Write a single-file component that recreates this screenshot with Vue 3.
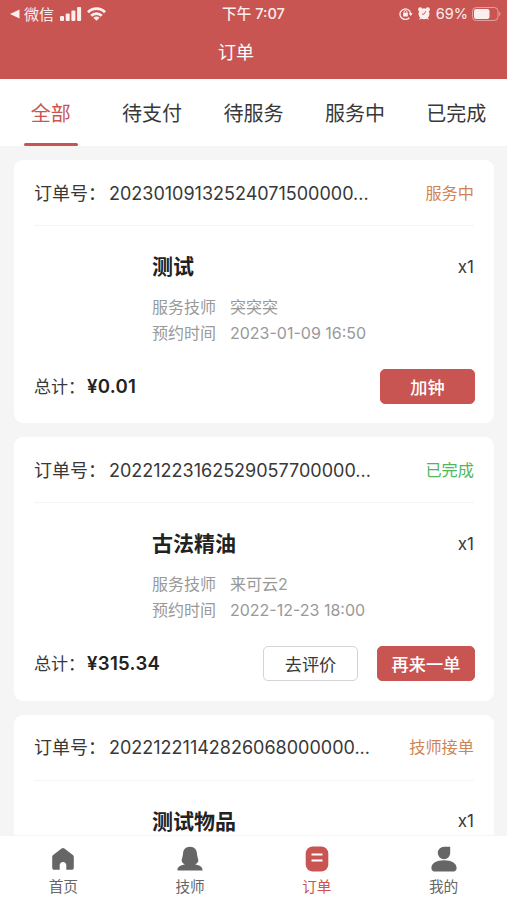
<script setup>
import { ref } from 'vue'

const tabs = ['全部', '待支付', '待服务', '服务中', '已完成']
const activeTab = ref('全部')

const orders = [
  {
    no: '20230109132524071500000...',
    status: '服务中',
    tone: 'orange',
    title: '测试',
    count: 1,
    master: '突突突',
    time: '2023-01-09 16:50',
    total: '0.01',
    actions: [{ text: '加钟', primary: true }],
  },
  {
    no: '20221223162529057700000...',
    status: '已完成',
    tone: 'green',
    title: '古法精油',
    count: 1,
    master: '来可云2',
    time: '2022-12-23 18:00',
    total: '315.34',
    actions: [
      { text: '去评价', primary: false },
      { text: '再来一单', primary: true },
    ],
  },
  {
    no: '20221221142826068000000...',
    status: '技师接单',
    tone: 'orange',
    title: '测试物品',
    count: 1,
  },
]

const navItems = [
  { key: 'home', text: '首页' },
  { key: 'master', text: '技师' },
  { key: 'order', text: '订单' },
  { key: 'mine', text: '我的' },
]
const activeNav = ref('order')
</script>

<template>
  <div class="page">
    <header class="header">
      <div class="status">
        <div class="status__side">
          <svg class="status__back" width="10" height="10" viewBox="0 0 10 10">
            <path d="M0 5 9.5 0.5v9z" fill="currentColor" />
          </svg>
          <span class="status__app">微信</span>
          <svg class="status__signal" width="22" height="14" viewBox="0 0 22 14" fill="currentColor">
            <rect x="0" y="9" width="4" height="5" rx="1" />
            <rect x="5.7" y="6.5" width="4" height="7.5" rx="1" />
            <rect x="11.4" y="3.5" width="4" height="10.5" rx="1" />
            <rect x="17.1" y="0" width="4" height="14" rx="1" />
          </svg>
          <svg class="status__wifi" width="19" height="14" viewBox="0 0 19 14">
            <g fill="none" stroke="currentColor" stroke-width="2.8">
              <path d="M1 5.2a12 12 0 0 1 17 0" />
              <path d="M4.2 8.7a7.6 7.6 0 0 1 10.6 0" />
            </g>
            <path d="M9.5 13.8 6.4 10.8a4.4 4.4 0 0 1 6.2 0z" fill="currentColor" />
          </svg>
        </div>
        <span class="status__time">下午 7:07</span>
        <div class="status__side status__side--right">
          <svg width="14" height="13" viewBox="0 0 14 13">
            <path d="M10.3 10.7a5.3 5.3 0 1 1 1.3-3" fill="none" stroke="currentColor" stroke-width="1.3" />
            <path d="M9.7 6.3h4l-2 2.6z" fill="currentColor" />
            <rect x="4.1" y="5.8" width="4.8" height="3.8" rx="0.6" fill="currentColor" />
            <path d="M5.1 6V4.9a1.4 1.4 0 0 1 2.8 0V6" fill="none" stroke="currentColor" />
          </svg>
          <svg class="status__alarm" width="12" height="13" viewBox="0 0 12 13">
            <g fill="currentColor">
              <circle cx="2.2" cy="2.4" r="2.1" />
              <circle cx="9.8" cy="2.4" r="2.1" />
              <circle cx="6" cy="6.8" r="5.5" />
              <path d="m1 12.8 1.5-2.8 1.8 1.2zM11 12.8l-1.5-2.8-1.8 1.2z" />
            </g>
            <path d="M7.8 4.2 6 7.2H4" fill="none" stroke="#c95553" stroke-width="0.9" />
          </svg>
          <span class="status__percent">69%</span>
          <svg class="status__battery" width="29" height="14" viewBox="0 0 29 14">
            <rect x="0.5" y="0.5" width="25.5" height="13" rx="3.8" fill="none" stroke="currentColor" opacity="0.5" />
            <path d="M27.2 4.8c1.6.6 1.6 3.8 0 4.4z" fill="currentColor" opacity="0.5" />
            <rect x="2" y="2" width="15.5" height="10" rx="2.2" fill="currentColor" />
          </svg>
        </div>
      </div>
      <h1 class="header__title">订单</h1>
    </header>

    <nav class="tabs">
      <button
        v-for="tab in tabs"
        :key="tab"
        type="button"
        class="tabs__item"
        :class="{ 'tabs__item--active': tab === activeTab }"
        @click="activeTab = tab"
      >
        {{ tab }}
      </button>
    </nav>

    <main class="list">
      <section v-for="order in orders" :key="order.no" class="card">
        <div class="card__head">
          <span class="card__label">订单号：</span>
          <span class="card__no">{{ order.no }}</span>
          <span class="card__status" :class="`card__status--${order.tone}`">{{ order.status }}</span>
        </div>
        <div class="card__body">
          <div class="card__cover"></div>
          <div class="card__info">
            <div class="card__title-row">
              <h2 class="card__title">{{ order.title }}</h2>
              <span class="card__count">x{{ order.count }}</span>
            </div>
            <dl v-if="order.master" class="card__meta">
              <dt>服务技师</dt>
              <dd>{{ order.master }}</dd>
              <dt>预约时间</dt>
              <dd>{{ order.time }}</dd>
            </dl>
          </div>
        </div>
        <div v-if="order.total" class="card__foot">
          <span class="card__sum">总计：</span>
          <strong class="card__price">¥{{ order.total }}</strong>
          <div class="card__actions">
            <button
              v-for="action in order.actions"
              :key="action.text"
              type="button"
              class="btn"
              :class="{ 'btn--primary': action.primary, 'btn--wide': action.text.length > 3 }"
            >
              {{ action.text }}
            </button>
          </div>
        </div>
      </section>
    </main>

    <footer class="nav">
      <button
        v-for="item in navItems"
        :key="item.key"
        type="button"
        class="nav__item"
        :class="{ 'nav__item--active': item.key === activeNav }"
        @click="activeNav = item.key"
      >
        <svg class="nav__icon" width="28" height="28" viewBox="0 0 28 28" fill="currentColor">
          <path
            v-if="item.key === 'home'"
            d="M12.6 3.6a2.3 2.3 0 0 1 2.8 0l8.1 6.1c.9.7 1.3 1.4 1.3 2.5v10.3c0 1.5-.8 2.3-2.3 2.3H17.3v-4.6c0-2-1.3-3.3-3.3-3.3s-3.3 1.3-3.3 3.3v4.6H5.5c-1.5 0-2.3-.8-2.3-2.3V12.200c0-1.100.4-1.800 1.300-2.500z"
          />
          <path
            v-else-if="item.key === 'master'"
            d="M14 1.700c4.500 0 6.800 3.100 7 7.200.1 2.700 1.300 4.500 1.300 6.500 0 1.900-1.300 2.900-3.300 3.900 2.200 1.100 7.600 1.100 7.600 6.100H1.400c0-5 5.400-5 7.600-6.100-2-1-3.300-2-3.300-3.900 0-2 1.200-3.800 1.300-6.500.2-4.100 2.500-7.200 7-7.200z"
          />
          <template v-else-if="item.key === 'order'">
            <rect x="2.7" y="1.5" width="22.6" height="25" rx="7" />
            <path d="M8.5 9.5h11M8.5 15.5h11" stroke="#fff" stroke-width="2.2" />
          </template>
          <template v-else>
            <path d="M14 1.8h6.2V8a6.2 6.2 0 1 1-6.2-6.2z" />
            <path d="M14 15.300c7.500 0 12.600 3 12.600 7.600 0 2.600-1.600 3.600-4.200 3.600H5.600c-2.600 0-4.200-1-4.200-3.600 0-4.600 5.100-7.600 12.600-7.600z" />
          </template>
        </svg>
        <span>{{ item.text }}</span>
      </button>
    </footer>
  </div>
</template>

<style>
body {
  margin: 0;
  overflow: hidden;
}
</style>

<style scoped>
.page {
  display: flex;
  flex-direction: column;
  height: 900px;
  overflow: hidden;
  background: #f5f5f5;
  color: #383838;
  font-family: Inter, 'Noto Sans CJK SC', sans-serif;
}
button {
  padding: 0;
  border: none;
  background: none;
  color: inherit;
  font-family: inherit;
  cursor: pointer;
}

.header {
  flex: none;
  height: 79px;
  background: #c95553;
  color: #fff;
}
.status {
  display: grid;
  grid-template-columns: 1fr auto 1fr;
  align-items: center;
  height: 27px;
  padding: 0 6px 0 10px;
  color: #fbeeed;
  font-size: 15px;
}
.status__side {
  display: flex;
  align-items: center;
}
.status__side--right {
  justify-content: flex-end;
}
.status__app {
  margin: 0 6px 1px 4px;
}
.status__wifi {
  margin-left: 5px;
}
.status__time {
  padding-right: 4px;
  padding-bottom: 2px;
  font-size: 14.6px;
  font-weight: 500;
}
.status__alarm {
  margin: 0 6px 0 5px;
}
.status__percent {
  margin-right: 4px;
  font-size: 14.5px;
}
.header__title {
  margin: 0;
  padding-right: 35px;
  font-size: 18px;
  font-weight: 400;
  line-height: 51px;
  text-align: center;
}

.tabs {
  display: flex;
  flex: none;
  height: 67px;
  background: #fff;
}
.tabs__item {
  position: relative;
  flex: 1;
  font-size: 20px;
}
.tabs__item--active {
  color: #c95553;
}
.tabs__item--active::after {
  content: '';
  position: absolute;
  bottom: 0;
  left: 50%;
  width: 54px;
  height: 3px;
  margin-left: -27px;
  border-radius: 2px;
  background: #c95553;
}

.list {
  display: flex;
  flex: 1;
  flex-direction: column;
  gap: 14px;
  min-height: 0;
  padding: 14px 13px 0 14px;
  overflow: hidden;
}
.card {
  flex: none;
  box-sizing: border-box;
  height: 263.3px;
  padding: 0 20px;
  border-radius: 9px;
  background: #fff;
}
.card__head {
  display: flex;
  align-items: center;
  height: 65px;
  border-bottom: 1px solid #f4f4f4;
  font-size: 18px;
  white-space: nowrap;
}
.card__label {
  width: 75px;
  padding-bottom: 2px;
}
.card__no {
  padding-top: 1px;
}
.card__status {
  margin-left: auto;
  padding-bottom: 2px;
  font-size: 16.2px;
}
.card__status--orange {
  color: #d08455;
}
.card__status--green {
  color: #4fb75d;
}
.card__body {
  display: flex;
  gap: 20px;
  height: 98px;
  padding-top: 20px;
}
.card__cover {
  width: 98px;
}
.card__info {
  flex: 1;
}
.card__title-row {
  display: flex;
  align-items: center;
  justify-content: space-between;
  height: 40px;
}
.card__title {
  margin: 0;
  padding-top: 2px;
  color: #222;
  font-size: 21px;
  font-weight: 600;
  line-height: 26px;
}
.card__count {
  padding-top: 1px;
  font-size: 17px;
}
.card__meta {
  display: grid;
  grid-template-columns: 64px 1fr;
  column-gap: 14px;
  margin: 9px 0 0;
  color: #999;
  font-size: 16px;
  line-height: 25.5px;
}
.card__meta dd {
  margin: 0;
}
.card__foot {
  display: flex;
  align-items: center;
  height: 35px;
  margin: 25px -1px 0 0;
}
.card__sum {
  width: 53px;
  padding-bottom: 2px;
  font-size: 17px;
  white-space: nowrap;
}
.card__price {
  padding-bottom: 1px;
  color: #222;
  font-size: 18.6px;
  font-weight: 600;
  letter-spacing: 0.3px;
}
.card__actions {
  display: flex;
  gap: 19px;
  margin-left: auto;
}
.btn {
  box-sizing: border-box;
  width: 95px;
  height: 35px;
  padding-bottom: 1px;
  border: 1px solid #d4d4d4;
  border-radius: 5px;
  font-size: 17.2px;
}
.btn--primary {
  border-color: #c95553;
  background: #c95553;
  color: #fff;
  font-weight: 500;
}
.btn--wide {
  width: 98px;
}

.nav {
  display: flex;
  flex: none;
  height: 64px;
  border-top: 1px solid #f5f5f5;
  background: #fff;
  color: #666;
}
.nav__item {
  display: flex;
  flex: 1;
  flex-direction: column;
  align-items: center;
  padding-top: 9px;
  font-size: 14.7px;
  line-height: 20px;
}
.nav__icon {
  flex: none;
  margin-bottom: 4px;
}
.nav__item--active {
  color: #c95553;
}
</style>
